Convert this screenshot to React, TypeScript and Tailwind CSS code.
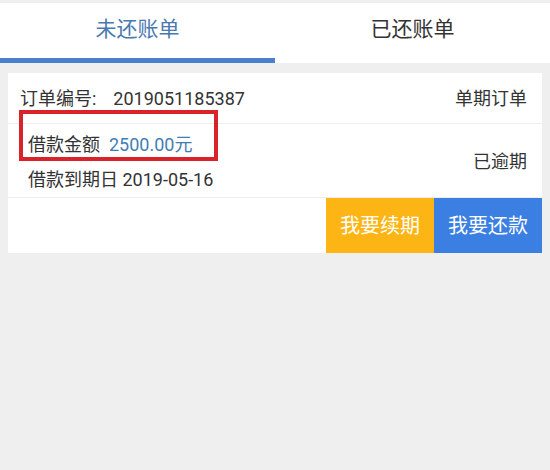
import React from "react";

const font = "font-['Roboto','Noto_Sans_CJK_SC',sans-serif]";

function Tabs() {
  return (
    <div className="flex h-[60px] bg-white">
      <div className="flex flex-1 flex-col">
        <div className="flex flex-1 items-center justify-center pb-[2px] text-[21px] text-[#4a78b0]">
          未还账单
        </div>
        <div className="h-[5px] bg-[#4a7fd0]" />
      </div>
      <div className="flex flex-1 flex-col">
        <div className="flex flex-1 items-center justify-center pb-[2px] text-[21px] text-[#333]">
          已还账单
        </div>
        <div className="h-[5px]" />
      </div>
    </div>
  );
}

function BillCard() {
  return (
    <div className="relative mx-2 mt-[10px] bg-white text-[#333]">
      <div className="flex h-[51px] items-center justify-between border-b border-[#eeeeee] pl-3 pr-[15px] text-[18px]">
        <span>
          订单编号:<span className="ml-[17px]">2019051185387</span>
        </span>
        <span>单期订单</span>
      </div>
      <div className="flex h-[74px] items-center justify-between border-b border-[#eeeeee] pl-5 pr-[15px] text-[18px]">
        <div className="flex flex-col gap-[11px] pt-[3px]">
          <div className="leading-[24px]">
            借款金额<span className="ml-[9px] text-[#3f7db5]">2500.00元</span>
          </div>
          <div className="leading-[24px]">借款到期日 2019-05-16</div>
        </div>
        <span className="pt-[2px]">已逾期</span>
      </div>
      <div className="flex h-[55px] justify-end">
        <button className="w-[108px] bg-[#fdb515] text-[20px] text-white">
          我要续期
        </button>
        <button className="w-[108px] bg-[#3c7fe2] text-[20px] text-white">
          我要还款
        </button>
      </div>
      <div className="absolute left-[11px] top-[37px] h-[51px] w-[199px] border-4 border-[#d8232a]" />
    </div>
  );
}

export default function App() {
  return (
    <div className={`min-h-[470px] bg-[#efefef] pt-[3px] ${font}`}>
      <Tabs />
      <BillCard />
    </div>
  );
}
